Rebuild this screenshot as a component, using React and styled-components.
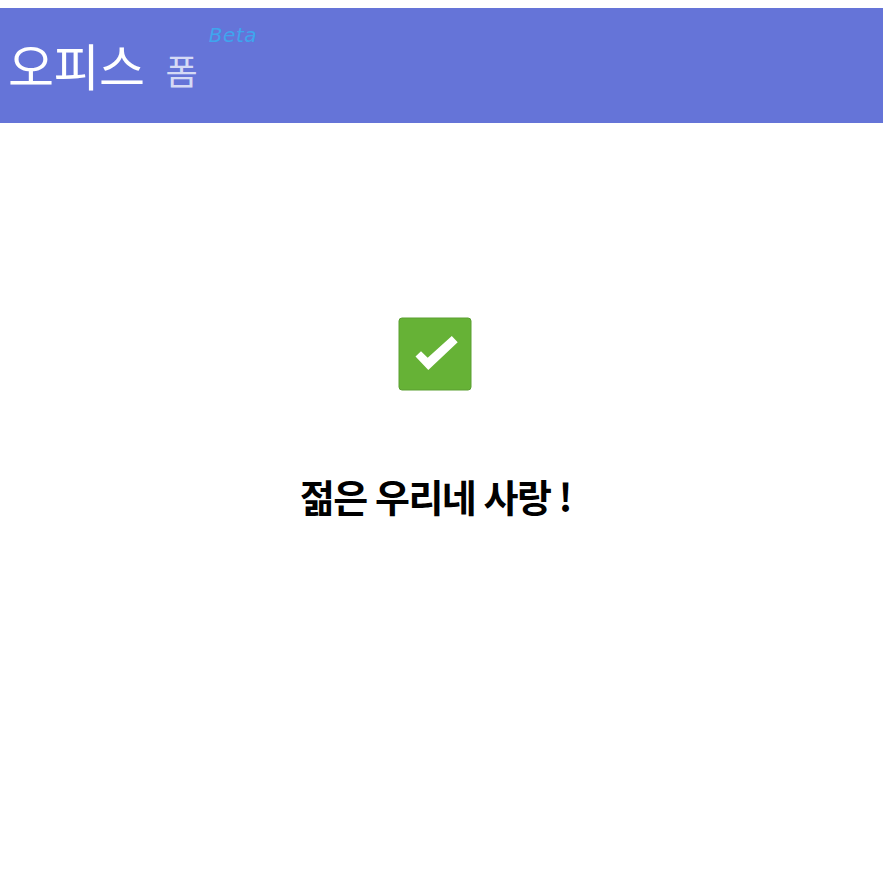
import React from 'react';
import styled, { createGlobalStyle } from 'styled-components';

const GlobalStyle = createGlobalStyle`
  html, body {
    margin: 0;
    padding: 0;
    background: #fff;
  }

  body {
    font-family: "Noto Sans CJK KR", "Noto Sans", sans-serif;
  }
`;

const Page = styled.div`
  padding-top: 8px;
  min-height: 867px;
  background: #fff;
`;

const Header = styled.header`
  display: flex;
  align-items: flex-start;
  height: 115px;
  padding-left: 8px;
  box-sizing: border-box;
  background: #6574d8;
`;

const Brand = styled.h1`
  margin: 18px 0 0;
  font-size: 50px;
  line-height: 76px;
  font-weight: 400;
  letter-spacing: -0.5px;
  color: #fff;
`;

const Sub = styled.span`
  margin: 39px 0 0 21px;
  font-size: 35px;
  line-height: 46px;
  font-weight: 400;
  color: #d5daf5;
`;

const Beta = styled.sup`
  margin: 13px 0 0 11px;
  font-family: "DejaVu Sans", sans-serif;
  font-size: 20px;
  line-height: 28px;
  font-style: italic;
  font-weight: 300;
  letter-spacing: 0.6px;
  color: #3fa5ee;
`;

const Content = styled.main`
  display: flex;
  flex-direction: column;
  align-items: center;
  padding: 194px 13px 0 0;
`;

const CheckIcon = styled.svg`
  display: block;
  width: 74px;
  height: 74px;
`;

const Message = styled.h2`
  margin: 77px 0 0 1px;
  font-size: 38px;
  line-height: 56px;
  font-weight: 700;
  letter-spacing: -1.5px;
  word-spacing: 1px;
  color: #000;
`;

export default function App() {
  return (
    <Page>
      <GlobalStyle />
      <Header>
        <Brand>오피스</Brand>
        <Sub>폼</Sub>
        <Beta>Beta</Beta>
      </Header>
      <Content>
        <CheckIcon viewBox="0 0 74 74">
          <rect x="1" y="1" width="72" height="72" rx="3" fill="#66b236" stroke="#5a9f30" strokeWidth="1" />
          <path d="M17.5 39.5 L23 34.2 L29.7 40.8 L53.8 19 L59.7 25.3 L30.3 53 Z" fill="#fff" />
        </CheckIcon>
        <Message>젊은 우리네 사랑 !</Message>
      </Content>
    </Page>
  );
}
